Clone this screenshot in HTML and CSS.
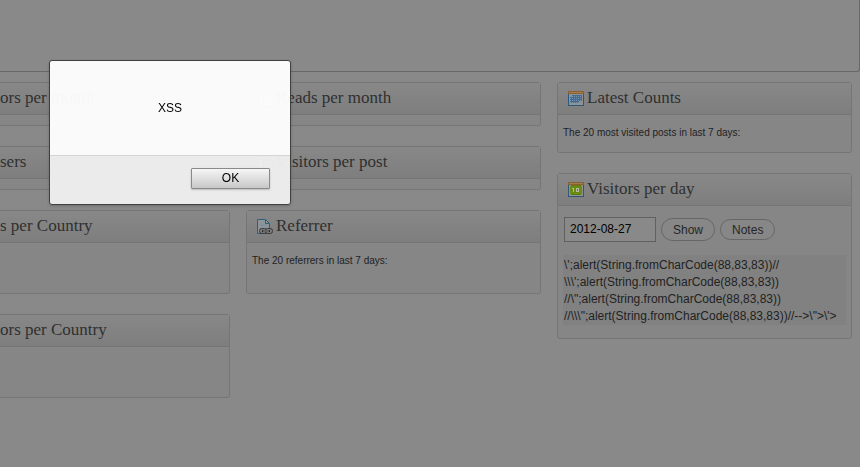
FILE: index.html
```html
<!DOCTYPE html>
<html lang="en">
  <head>
    <meta charset="utf-8">
    <title>Statistics</title>
    <link rel="stylesheet" href="styles.css">
  </head>
  <body>
    <div class="overview"></div>

    <main class="columns">
      <!-- left column -->
      <div class="column first">
        <section class="panel">
          <h3>ors per month</h3>
          <div class="inside"></div>
        </section>
        <section class="panel">
          <h3>sers</h3>
          <div class="inside"></div>
        </section>
        <section class="panel">
          <h3>s per Country</h3>
          <div class="inside chart"></div>
        </section>
        <section class="panel">
          <h3>ors per Country</h3>
          <div class="inside chart"></div>
        </section>
      </div>

      <!-- middle column -->
      <div class="column">
        <section class="panel">
          <h3>
            <svg class="icon" viewBox="0 0 16 16" fill="#8d959b" stroke="#2c5f7c">
              <path d="M.5 1.5h6l3 3v8h-9z"/>
              <path d="M6.500 4.500h5l4 4v7h-9z"/>
            </svg>
            Reads per month
          </h3>
          <div class="inside"></div>
        </section>
        <section class="panel">
          <h3>
            <svg class="icon" viewBox="0 0 16 16" fill="#8d959b" stroke="#2c5f7c">
              <path d="M.5 1.500h10v13h-10z"/>
              <path d="M6.500 5.500h9v9h-9z"/>
            </svg>
            Visitors per post
          </h3>
          <div class="inside"></div>
        </section>
        <section class="panel">
          <h3>
            <svg class="icon" viewBox="0 0 16 16" fill="none">
              <path d="M.5.500h8l4 4v10h-12z" fill="#8d959b" stroke="#2c5f7c"/>
              <path d="M8.500 1v3.500H12" stroke="#2c5f7c"/>
              <path d="M3 6h6" stroke="#7c8a94"/>
              <rect x="2.500" y="9.500" width="7" height="5" rx="2" fill="#777" stroke="#3c3c3c"/>
              <rect x="8.500" y="9.500" width="7" height="5" rx="2" fill="#777" stroke="#3c3c3c"/>
              <path d="M5 12h8" stroke="#303030" stroke-width="2"/>
              <path d="M6 12h6" stroke="#999"/>
            </svg>
            Referrer
          </h3>
          <div class="inside list">
            <p>The 20 referrers in last 7 days:</p>
          </div>
        </section>
      </div>

      <!-- right column -->
      <div class="column">
        <section class="panel">
          <h3>
            <svg class="icon" viewBox="0 0 16 16" shape-rendering="crispEdges">
              <path d="M0 0h16v15H0z" fill="#2c5878"/>
              <path d="M1 3h14v11H1z" fill="#929292"/>
              <path d="M0 0h16v3H0z" fill="#8c6030"/>
              <path d="M1 1h14v1H1z" fill="#a07c50"/>
              <path d="M4 4h10v6H4zM2 6h2v6H2zM4 10h7v2H4z" fill="#416a94"/>
              <path d="M2 5.500h12M2 7.500h12M2 9.500h12M2 11.500h12" stroke="#7890a6" stroke-dasharray="1 1"/>
            </svg>
            Latest Counts
          </h3>
          <div class="inside">
            <p>The 20 most visited posts in last 7 days:</p>
          </div>
        </section>
        <section class="panel">
          <h3>
            <svg class="icon" viewBox="0 0 16 16" shape-rendering="crispEdges">
              <path d="M0 0h16v15H0z" fill="#2c5878"/>
              <path d="M1 3h14v11H1z" fill="#929292"/>
              <path d="M0 0h16v3H0z" fill="#8c6030"/>
              <path d="M1 1h14v1H1z" fill="#a07c50"/>
              <path d="M3 3h10v10H3z" fill="#5c7a10"/>
              <path d="M2 4h12v8H2z" fill="#6b8a14"/>
              <path d="M5 6h1v4H5zM4 6h1v1H4zM8 6h3v4H8z" fill="#b4b9a0"/>
              <path d="M9 7h1v2H9z" fill="#6b8a14"/>
            </svg>
            Visitors per day
          </h3>
          <div class="inside">
            <form class="day-form">
              <input type="text" name="day" value="2012-08-27" aria-label="Day">
              <button type="button" class="show">Show</button>
              <button type="button">Notes</button>
            </form>
            <div class="note">\';alert(String.fromCharCode(88,83,83))//<br>\\\';alert(String.fromCharCode(88,83,83))<br>//\";alert(String.fromCharCode(88,83,83))<br>//\\\";alert(String.fromCharCode(88,83,83))//--&gt;\"&gt;\'&gt;</div>
          </div>
        </section>
      </div>
    </main>

    <div class="alert" role="alertdialog" aria-describedby="alert-text">
      <p id="alert-text">XSS</p>
      <div class="alert-buttons">
        <button type="button">OK</button>
      </div>
    </div>
  </body>
</html>
```

FILE: styles.css
```css
* {
  box-sizing: border-box;
}

body {
  margin: 0;
  min-height: 100vh;
  overflow: hidden;
  background-color: #898989;
  color: #222;
  font-family: "Liberation Sans", Arial, sans-serif;
  font-size: 12px;
}

.overview {
  height: 72px;
  border: 1px solid #686868;
  border-width: 0 1px 1px 0;
  border-radius: 0 0 3px 0;
}

/* the left column runs out of the window */
.columns {
  display: grid;
  grid-template-columns: repeat(3, 1fr);
  gap: 16px;
  margin: 10px 8px 0 -65px;
}

.column {
  display: flex;
  flex-direction: column;
  gap: 20px;
}

.panel {
  border: 1px solid #757575;
  border-radius: 3px;
  background-color: #868686;
}

.panel h3 {
  display: flex;
  gap: 3px;
  height: 32px;
  margin: 0;
  padding: 0 10px;
  border-bottom: 1px solid #757575;
  background: linear-gradient(#888, #7e7e7e);
  color: #303030;
  font-family: Georgia, "Liberation Serif", serif;
  font-size: 17px;
  font-weight: normal;
  line-height: 29px;
  white-space: nowrap;
}

.first .panel h3 {
  padding-left: 64px;
}

.icon {
  flex: none;
  align-self: center;
  width: 16px;
  height: 16px;
}

.inside {
  min-height: 10px;
  padding: 0 5px;
}

.inside p {
  margin: 0;
  padding: 11px 0 12px;
  font-size: 10px;
  line-height: 14px;
}

.chart,
.list {
  min-height: 50px;
}

.day-form {
  display: flex;
  align-items: center;
  gap: 5px;
  padding: 11px 1px 13px;
}

.day-form input {
  width: 92px;
  height: 25px;
  padding: 0 5px 2px;
  border: 1px solid #606060;
  border-radius: 0;
  background-color: #898989;
  color: #000;
  font: 12px "Liberation Sans", Arial, sans-serif;
}

.day-form button {
  height: 21px;
  padding: 0 11px;
  border: 1px solid #666;
  border-radius: 12px;
  background-color: #878787;
  color: #262626;
  font: 12px "Liberation Sans", Arial, sans-serif;
}

.day-form .show {
  height: 23px;
}

.note {
  margin-bottom: 13px;
  padding: 2px 1px 0;
  background-color: #818181;
  line-height: 17px;
  white-space: nowrap;
}

/* alert box */
.alert {
  position: fixed;
  top: 60px;
  left: 49px;
  width: 242px;
  border: 1px solid #404040;
  border-radius: 3px;
  background-color: rgba(255, 255, 255, 0.96);
  color: #000;
  box-shadow: 0 1px 3px rgba(0, 0, 0, 0.2);
}

.alert p {
  margin: 0;
  text-align: center;
  line-height: 94px;
}

.alert-buttons {
  display: flex;
  justify-content: flex-end;
  padding: 12px 20px 15px;
  border-top: 1px solid #d4d4d4;
  background-color: rgba(0, 0, 0, 0.06);
}

.alert-buttons button {
  width: 79px;
  height: 21px;
  padding: 0 0 2px;
  border: 1px solid #8a8a8a;
  border-radius: 1px;
  background: linear-gradient(#f6f6f6, #c8c8c8);
  box-shadow: 0 1px 2px rgba(0, 0, 0, 0.2);
  color: #000;
  font: 12px "Liberation Sans", Arial, sans-serif;
}
```
